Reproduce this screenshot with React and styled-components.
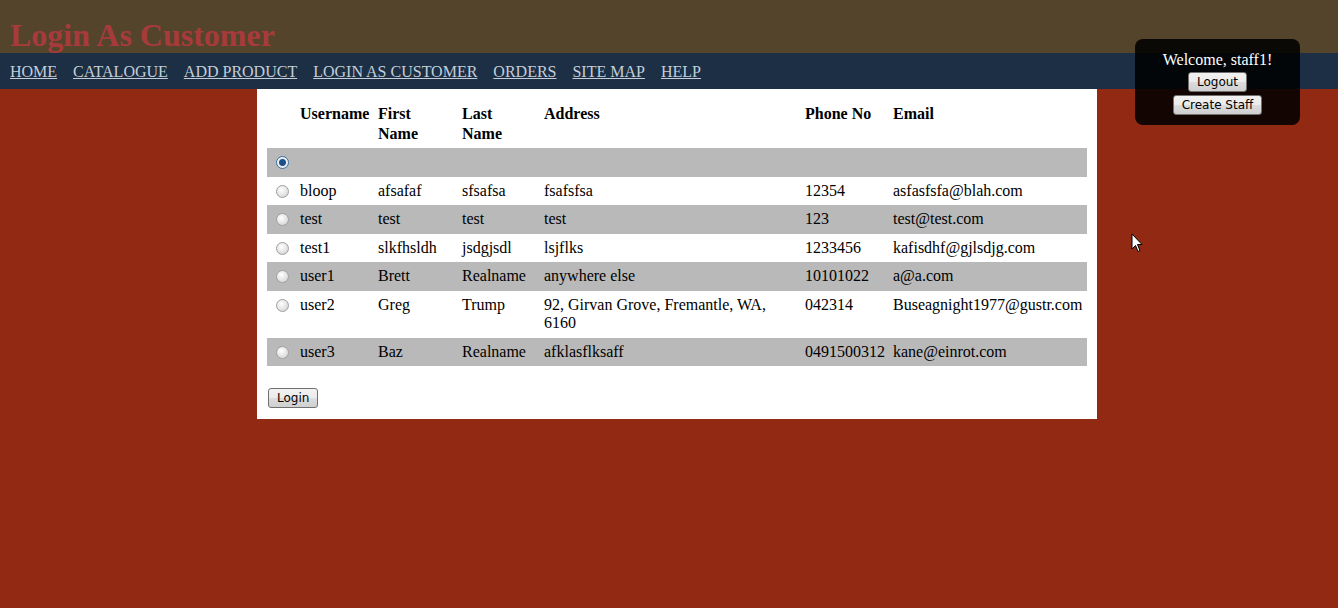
import React from "react";
import styled, { createGlobalStyle } from "styled-components";

const GlobalStyle = createGlobalStyle`
  html, body {
    margin: 0;
    padding: 0;
    background: #922912;
    font-family: "Liberation Serif", "Times New Roman", serif;
    font-size: 16px;
  }
`;

const Page = styled.div`
  position: relative;
  width: 1338px;
  height: 608px;
  overflow: hidden;
  background: #922912;
`;

const Header = styled.header`
  height: 53px;
  background: #54442c;
  display: flex;
  align-items: flex-end;
  padding-left: 10px;
`;

const Title = styled.h1`
  margin: 0 0 2px;
  font-size: 32px;
  line-height: 32px;
  font-weight: bold;
  color: #a73b3b;
  position: relative;
  z-index: 1;
`;

const Nav = styled.nav`
  height: 36px;
  background: #1c2f44;
  display: flex;
  align-items: center;
  gap: 16px;
  padding: 1px 0 0 10px;
  box-sizing: border-box;
`;

const NavLink = styled.a`
  color: #c5ced8;
  text-decoration: underline;
  font-size: 16px;
  line-height: 18px;
  cursor: pointer;
`;

const Panel = styled.main`
  width: 820px;
  margin: 0 auto;
  background: #fff;
  padding: 11px 10px 11px;
  transform: translateX(8px);
`;

const Table = styled.table`
  width: 820px;
  border-collapse: collapse;
  table-layout: fixed;
`;

const Th = styled.th`
  text-align: left;
  vertical-align: top;
  font-weight: bold;
  padding: 4px 5px 4px;
  line-height: 20px;
  width: ${(p) => p.$w - 10}px;
`;

const Row = styled.tr`
  background: ${(p) => (p.$shaded ? "#b9b9b9" : "#fff")};
`;

const Td = styled.td`
  vertical-align: top;
  padding: 5px;
  line-height: 18.5px;
  color: #000;
`;

const Radio = styled.span`
  display: inline-block;
  vertical-align: top;
  width: 11px;
  height: 11px;
  margin: 3px 0 0 4px;
  border-radius: 50%;
  border: 1px solid ${(p) => (p.$checked ? "#3c6e9e" : "#a0a0a0")};
  background: ${(p) =>
    p.$checked
      ? "radial-gradient(circle at 50% 50%, #1e4f86 0 3px, #e8eef5 4px)"
      : "radial-gradient(circle at 40% 35%, #ffffff 0, #dcdcdc 70%, #c8c8c8 100%)"};
`;

const Button = styled.button`
  font-family: Tahoma, "DejaVu Sans", "Liberation Sans", sans-serif;
  font-size: 12px;
  height: 20px;
  padding: 0 8px;
  border: 1px solid #707070;
  border-radius: 3px;
  background: linear-gradient(#f2f2f2 0%, #ebebeb 50%, #dddddd 51%, #cfcfcf 100%);
  color: #000;
  cursor: pointer;
`;

const Actions = styled.div`
  padding: 22px 0 0 1px;
  height: 20px;
`;

const WelcomeBox = styled.div`
  position: absolute;
  top: 39px;
  left: 1135px;
  width: 165px;
  height: 86px;
  box-sizing: border-box;
  border-radius: 8px;
  background: rgba(0, 0, 0, 0.87);
  display: flex;
  flex-direction: column;
  align-items: center;
  padding-top: 12px;
  gap: 3px;
`;

const WelcomeText = styled.div`
  color: #fff;
  font-size: 16px;
  line-height: 18px;
`;

const Cursor = styled.svg`
  position: absolute;
  left: 1131px;
  top: 233px;
`;

const columns = [
  { w: 28, label: "" },
  { w: 78, label: "Username" },
  { w: 84, label: "First Name" },
  { w: 82, label: "Last Name" },
  { w: 261, label: "Address" },
  { w: 88, label: "Phone No" },
  { w: 199, label: "Email" },
];

const customers = [
  { checked: true, cells: ["", "", "", "", "", ""] },
  { cells: ["bloop", "afsafaf", "sfsafsa", "fsafsfsa", "12354", "asfasfsfa@blah.com"] },
  { cells: ["test", "test", "test", "test", "123", "test@test.com"] },
  { cells: ["test1", "slkfhsldh", "jsdgjsdl", "lsjflks", "1233456", "kafisdhf@gjlsdjg.com"] },
  { cells: ["user1", "Brett", "Realname", "anywhere else", "10101022", "a@a.com"] },
  {
    cells: [
      "user2",
      "Greg",
      "Trump",
      "92, Girvan Grove, Fremantle, WA, 6160",
      "042314",
      "Buseagnight1977@gustr.com",
    ],
  },
  { cells: ["user3", "Baz", "Realname", "afklasflksaff", "0491500312", "kane@einrot.com"] },
];

const navItems = ["HOME", "CATALOGUE", "ADD PRODUCT", "LOGIN AS CUSTOMER", "ORDERS", "SITE MAP", "HELP"];

export default function App() {
  return (
    <Page>
      <GlobalStyle />
      <Header>
        <Title>Login As Customer</Title>
      </Header>
      <Nav>
        {navItems.map((item) => (
          <NavLink key={item}>{item}</NavLink>
        ))}
      </Nav>
      <Panel>
        <Table>
          <thead>
            <tr>
              {columns.map((c, i) => (
                <Th key={i} $w={c.w}>
                  {c.label}
                </Th>
              ))}
            </tr>
          </thead>
          <tbody>
            {customers.map((c, i) => (
              <Row key={i} $shaded={i % 2 === 0}>
                <Td>
                  <Radio $checked={c.checked} />
                </Td>
                {c.cells.map((v, j) => (
                  <Td key={j}>{v}</Td>
                ))}
              </Row>
            ))}
          </tbody>
        </Table>
        <Actions>
          <Button>Login</Button>
        </Actions>
      </Panel>
      <WelcomeBox>
        <WelcomeText>Welcome, staff1!</WelcomeText>
        <Button>Logout</Button>
        <Button>Create Staff</Button>
      </WelcomeBox>
      <Cursor width="13" height="21" viewBox="0 0 13 21">
        <path d="M1 1 L1 16 L4.5 12.5 L7 18.5 L9 17.5 L6.5 11.5 L11 11.5 Z" fill="#fff" stroke="#000" strokeWidth="1" />
      </Cursor>
    </Page>
  );
}
